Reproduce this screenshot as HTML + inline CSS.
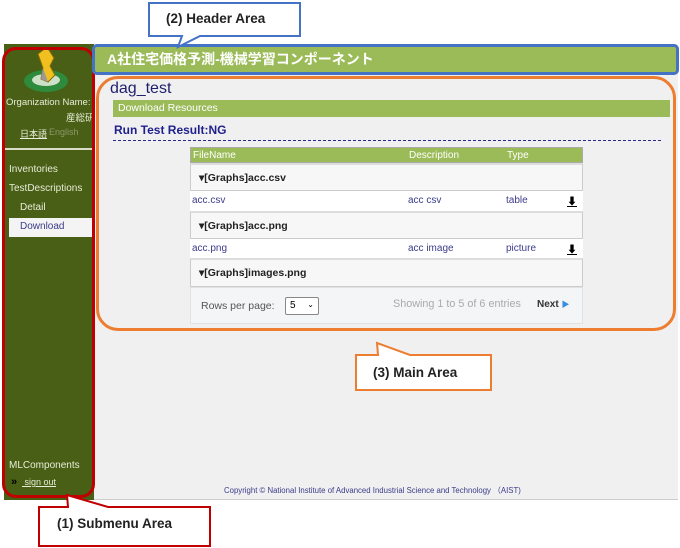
<!DOCTYPE html>
<html><head><meta charset="utf-8"><style>
*{margin:0;padding:0;box-sizing:border-box}
body{width:680px;height:548px;background:#fff;position:relative;overflow:hidden;font-family:"Liberation Sans","Noto Sans CJK JP",sans-serif}
.a{position:absolute}
.side{left:4px;top:44px;width:90px;height:456px;background:#495f15}
.main{left:94px;top:44px;width:584px;height:456px;background:#f0f0f0;border-bottom:1px solid #ccc}
.s{color:#e8ecd8;font-size:10px}
.tbl{left:190px;top:147px;width:393px;font-size:10px}
.row{position:absolute;left:0;width:393px}
.grp{background:#f7f7f7;border:1px solid #ccc;border-top:2px solid #ddd;font-weight:bold;color:#222;font-size:10.5px;padding-left:8px}
.dat{background:#fff;color:#3b3c8a;font-size:10px}
</style></head><body>
<div class="a side"></div>
<div class="a main"></div>
<svg class="a" style="left:20px;top:44px" width="54" height="54">
<ellipse cx="26" cy="37" rx="22" ry="11" fill="#2e8a3c"/>
<ellipse cx="26" cy="36" rx="14" ry="6" fill="#cde0c8"/>
<path d="M18 10 L27 3 L34 14 L30 22 L35 31 L28 38 L21 35 L23 24 Z" fill="#f0c020" stroke="#8a6a00" stroke-width="1"/>
<path d="M23 24 L28 38 L21 35 Z" fill="#999"/>
</svg>
<div class="a s" style="left:6px;top:97px;font-size:9.5px">Organization Name:</div>
<div class="a s" style="left:66px;top:110px;font-size:9.5px">産総研</div>
<div class="a s" style="left:20px;top:127px;font-size:9px;text-decoration:underline">日本語</div>
<div class="a" style="left:49px;top:127px;font-size:9px;color:#8a9a6a">English</div>
<div class="a" style="left:5px;top:148px;width:87px;height:2px;background:#d8dcc8"></div>
<div class="a s" style="left:9px;top:164px">Inventories</div>
<div class="a s" style="left:9px;top:183px">TestDescriptions</div>
<div class="a s" style="left:20px;top:202px">Detail</div>
<div class="a" style="left:9px;top:218px;width:83px;height:19px;background:#f4f4f4;color:#3b3c8a;font-size:10px;padding:3px 0 0 11px">Download</div>
<div class="a s" style="left:9px;top:460px">MLComponents</div>
<div class="a" style="left:11px;top:476px;color:#000;font-size:11px;font-weight:bold">»</div>
<div class="a s" style="left:22px;top:477px;font-size:9px;text-decoration:underline">&nbsp;sign out</div>
<div class="a" style="left:95px;top:46px;width:582px;height:26px;background:#9bbb59"></div>
<div class="a" style="left:107px;top:49px;color:#fff;font-weight:bold;font-size:14px">A社住宅価格予測-機械学習コンポーネント</div>
<div class="a" style="left:110px;top:80px;color:#1f1f6e;font-size:16px">dag_test</div>
<div class="a" style="left:113px;top:100px;width:557px;height:17px;background:#9bbb59;color:#fff;font-size:10.5px;padding:2px 0 0 5px">Download Resources</div>
<div class="a" style="left:114px;top:123px;color:#1f1f8e;font-weight:bold;font-size:12px">Run Test Result:NG</div>
<div class="a" style="left:113px;top:140px;width:548px;border-top:1px dashed #2a2a8e"></div>
<div class="a tbl">
<div class="row" style="top:0;height:16px;background:#9bbb59;color:#fff;border:1px solid #aaa"><span class="a" style="left:2px;top:2px">FileName</span><span class="a" style="left:218px;top:2px">Description</span><span class="a" style="left:316px;top:2px">Type</span></div>
<div class="row grp" style="top:16px;height:28px;line-height:26px">▾[Graphs]acc.csv</div>
<div class="row dat" style="top:44px;height:20px"><span class="a" style="left:2px;top:4px">acc.csv</span><span class="a" style="left:218px;top:4px">acc csv</span><span class="a" style="left:316px;top:4px">table</span><span class="a" style="left:377px;top:2px;color:#000;font-weight:bold;text-decoration:underline">⬇</span></div>
<div class="row grp" style="top:64px;height:28px;line-height:26px">▾[Graphs]acc.png</div>
<div class="row dat" style="top:92px;height:19px"><span class="a" style="left:2px;top:4px">acc.png</span><span class="a" style="left:218px;top:4px">acc image</span><span class="a" style="left:316px;top:4px">picture</span><span class="a" style="left:377px;top:2px;color:#000;font-weight:bold;text-decoration:underline">⬇</span></div>
<div class="row grp" style="top:111px;height:29px;line-height:27px">▾[Graphs]images.png</div>
<div class="row" style="top:140px;height:37px;background:#f4f5f7;border:1px solid #e2e2e2"><span class="a" style="left:10px;top:12px;color:#555;font-size:10.5px">Rows per page:</span><span class="a" style="left:94px;top:9px;width:34px;height:18px;border:1px solid #888;background:#fff;border-radius:2px;font-size:10px;padding:2px 4px">5 <span style="float:right;font-size:8px">⌄</span></span><span class="a" style="left:202px;top:10px;color:#aaa;font-size:10.8px">Showing 1 to 5 of 6 entries</span><span class="a" style="left:346px;top:11px;color:#333;font-weight:bold">Next <span style="color:#3a8de0;font-size:8px">▶</span></span></div>
</div>
<div class="a" style="left:224px;top:485px;font-size:7.8px;color:#3b3c8a">Copyright © National Institute of Advanced Industrial Science and Technology （AIST)</div>
<div class="a" style="left:2px;top:47px;width:93px;height:451px;border:3px solid #c00000;border-radius:14px"></div>
<div class="a" style="left:92px;top:44px;width:587px;height:31px;border:3px solid #4472c4;border-radius:5px"></div>
<div class="a" style="left:96px;top:76px;width:580px;height:255px;border:3px solid #ed7d31;border-radius:22px"></div>
<svg class="a" style="left:0;top:0" width="680" height="548">
<path d="M149 3 H300 V36 H200 L178 47 L182 36 H149 Z" fill="#fff" stroke="#4472c4" stroke-width="2"/>
<path d="M356 355 H378 L377 343 L410 355 H491 V390 H356 Z" fill="#fff" stroke="#ed7d31" stroke-width="2"/>
<path d="M39 507 H68 L67 495 L108 507 H210 V546 H39 Z" fill="#fff" stroke="#c00000" stroke-width="2"/>
</svg>
<div class="a" style="left:166px;top:11px;font-weight:bold;font-size:13.5px;color:#222">(2) Header Area</div>
<div class="a" style="left:373px;top:365px;font-weight:bold;font-size:13.5px;color:#222">(3) Main Area</div>
<div class="a" style="left:57px;top:516px;font-weight:bold;font-size:13.5px;color:#222">(1) Submenu Area</div>
</body></html>
